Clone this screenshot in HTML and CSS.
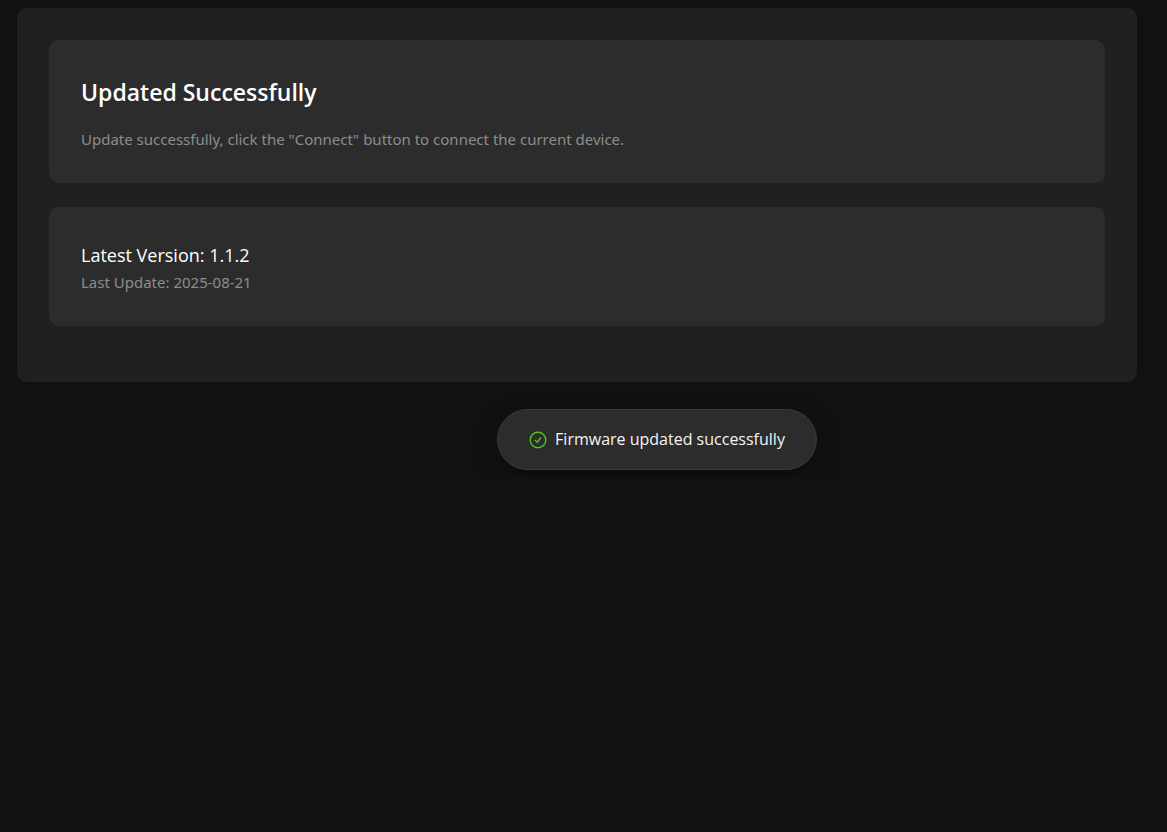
FILE: index.html
```html
<!DOCTYPE html>
<html lang="en">
<head>
    <meta charset="UTF-8">
    <meta name="viewport" content="width=device-width, initial-scale=1.0">
    <title>Firmware Update</title>
    <link rel="stylesheet" href="styles.css">
</head>
<body>
    <main class="panel">
        <section class="card">
            <h1>Updated Successfully</h1>
            <p class="hint">Update successfully, click the "Connect" button to connect the current device.</p>
        </section>
        <section class="card">
            <h2>Latest Version: 1.1.2</h2>
            <p class="date">Last Update: 2025-08-21</p>
        </section>
    </main>

    <div class="toast-area">
        <div class="toast" role="status">
            <svg class="toast-icon" viewBox="0 0 18 18" aria-hidden="true">
                <circle cx="9" cy="9" r="7.8"/>
                <path d="M6 9l2.2 2.3 3.8-4.8"/>
            </svg>
            <span>Firmware updated successfully</span>
        </div>
    </div>
</body>
</html>
```

FILE: styles.css
```css
* {
    box-sizing: border-box;
}

body {
    font-family: "Segoe UI", "Open Sans", sans-serif;
    background-color: #111;
    margin: 0;
    padding: 8px 30px 8px 17px;
    color: #fff;
}

h1, h2, p {
    margin: 0;
}

.panel {
    background: #202020;
    padding: 32px 32px 56px;
    border-radius: 10px;
    display: flex;
    flex-direction: column;
    gap: 24px;
}

.card {
    background: #2c2c2c;
    padding: 32px;
    border-radius: 10px;
}

h1 {
    font-size: 23px;
    font-weight: 600;
    line-height: 40px;
    margin-bottom: 16px;
}

h2 {
    font-size: 18px;
    font-weight: 400;
    line-height: 32px;
}

.hint, .date {
    font-family: "Segoe UI", "Noto Sans", sans-serif;
    font-size: 15px;
    line-height: 23px;
    color: #8c8c8c;
}

.toast-area {
    display: flex;
    justify-content: center;
    margin-top: 27px;
    padding-left: 160px;
}

.toast {
    display: flex;
    align-items: center;
    gap: 8px;
    padding: 18px 31px;
    border: 1px solid #3a3a3a;
    border-radius: 31px;
    background: #2c2c2c;
    box-shadow: 0 8px 24px rgba(0, 0, 0, 0.3);
    color: #f5f5f5;
    font-size: 16px;
    line-height: 23px;
}

.toast-icon {
    width: 18px;
    height: 18px;
    fill: none;
    stroke: #52c41a;
    stroke-width: 1.4;
}
```
